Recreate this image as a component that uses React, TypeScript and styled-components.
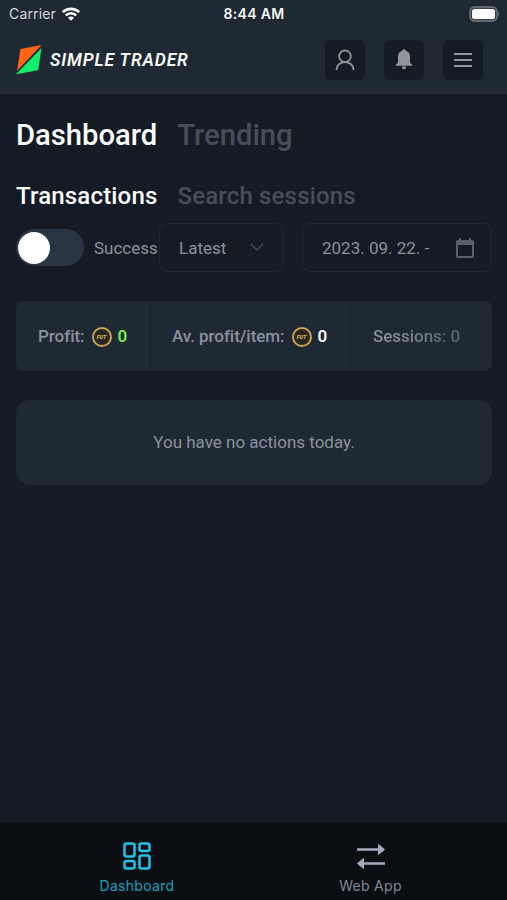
import React from 'react';
import styled, { createGlobalStyle } from 'styled-components';

const GlobalStyle = createGlobalStyle`
  * { box-sizing: border-box; }
  body { margin: 0; background: #141b24; }
`;

const Screen = styled.div`
  width: 507px;
  height: 900px;
  display: flex;
  flex-direction: column;
  overflow: hidden;
  background: #141b24;
  color: #8b929e;
  font-family: Roboto, sans-serif;
  white-space: nowrap;
`;

const TopBar = styled.header`
  height: 94px;
  background: #1f2933;
`;

const StatusBar = styled.div`
  height: 27px;
  display: grid;
  grid-template-columns: 1fr auto 1fr;
  align-items: center;
  padding: 0 7px 0 9px;
  font-family: Inter, sans-serif;
  color: #f4f5f6;
`;

const Carrier = styled.div`
  display: flex;
  align-items: center;
  gap: 6px;
  font-size: 14px;
  letter-spacing: 0.15px;
  color: #d6d9dc;
`;

const Clock = styled.div`
  font-size: 14px;
  font-weight: 600;
  letter-spacing: 0.3px;
  margin-right: 1px;
`;

const Battery = styled.svg`
  justify-self: end;
`;

const Header = styled.div`
  height: 65px;
  display: flex;
  align-items: center;
  padding: 0 24px 0 15px;
`;

const Brand = styled.div`
  display: flex;
  align-items: center;
  gap: 8px;
  margin-right: auto;
`;

const BrandName = styled.span`
  font: italic 600 17.5px/20px Roboto, sans-serif;
  letter-spacing: 0.86px;
  color: #f8f9fa;
`;

const Actions = styled.div`
  display: flex;
  gap: 19px;
`;

const IconButton = styled.button`
  width: 40px;
  height: 40px;
  padding: 0;
  border: 0;
  border-radius: 6px;
  display: grid;
  place-items: center;
  background: #141b24;
  color: #92969c;
`;

const Content = styled.main`
  flex: 1;
  padding: 0 15px 0 16px;
`;

const Tabs = styled.nav<{ $size: number; $height: number; $spacing: number }>`
  display: flex;
  align-items: center;
  gap: 20px;
  height: ${p => p.$height}px;
  font-size: ${p => p.$size}px;
  letter-spacing: ${p => p.$spacing}px;
`;

const Tab = styled.span<{ $active?: boolean }>`
  font-weight: 500;
  color: ${p => (p.$active ? '#fbfcfd' : '#454f5b')};
`;

const Filters = styled.div`
  display: flex;
  align-items: center;
  height: 49px;
  margin-top: 8px;
  font-size: 17px;
`;

const Toggle = styled.div`
  display: flex;
  align-items: center;
  width: 68px;
  height: 37px;
  padding: 0 2px;
  border-radius: 19px;
  background: #293543;
`;

const Knob = styled.div`
  width: 32px;
  height: 32px;
  border-radius: 50%;
  background: #fff;
`;

const ToggleLabel = styled.span`
  width: 75px;
  padding-left: 10px;
`;

const Field = styled.div<{ $width: number; $gap?: number; $end: number }>`
  width: ${p => p.$width}px;
  height: 49px;
  margin-left: ${p => p.$gap ?? 0}px;
  padding: 0 ${p => p.$end}px 0 19px;
  border: 1px solid #1f2731;
  border-radius: 8px;
  display: flex;
  align-items: center;
  justify-content: space-between;
`;

const Stats = styled.section`
  height: 70px;
  margin-top: 29px;
  display: grid;
  grid-template-columns: 134px 201px 1fr;
  border-radius: 8px;
  overflow: hidden;
  background: #1f2933;
`;

const Stat = styled.div<{ $fade?: boolean }>`
  display: flex;
  align-items: center;
  padding-left: 22px;
  font-size: 17px;
  font-weight: 500;
  letter-spacing: -0.04px;
  border-right: ${p => (p.$fade ? '0' : '1px solid #18212b')};

  & > span {
    ${p => p.$fade && `
      color: transparent;
      background: linear-gradient(90deg, #8b929e 20%, #5c6672 85%);
      background-clip: text;
    `}
  }
`;

const StatValue = styled.b<{ $color: string }>`
  font-weight: 600;
  color: ${p => p.$color};
`;

const Coin = styled.div`
  width: 20px;
  height: 20px;
  margin: 1px 6px 0 7px;
  display: grid;
  place-items: center;
  border: 2px solid #c9a44e;
  border-radius: 50%;
  background: #272620;
  color: #d9b75c;
  font: italic 900 5.5px/6px Roboto, sans-serif;
`;

const Empty = styled.section`
  height: 85px;
  margin-top: 29px;
  padding-bottom: 1px;
  display: grid;
  place-items: center;
  border-radius: 14px;
  background: #1f2933;
  font-size: 17px;
`;

const BottomNav = styled.nav`
  height: 78px;
  display: grid;
  grid-template-columns: 234px 233px;
  padding-left: 20px;
  background: #0b0f14;
`;

const NavItem = styled.div<{ $color: string }>`
  display: flex;
  flex-direction: column;
  align-items: center;
  padding-top: 20px;
  gap: 7px;
  color: ${p => p.$color};
  font: 400 14px/18px Inter, sans-serif;
  letter-spacing: 0.3px;
`;

const NavText = styled.span<{ $color: string }>`
  color: ${p => p.$color};
`;

const WifiIcon = () => (
  <svg width="18" height="14" viewBox="0 0 18 14" fill="none" stroke="#fff" strokeWidth="2.6">
    <path d="M.8 5.2C5.2.7 12.8.7 17.2 5.2M3.8 8.4c3-2.9 7.4-2.9 10.4 0" />
    <path d="M9 13.8 6 10.8Q9 8.4 12 10.8Z" fill="#fff" stroke="none" />
  </svg>
);

const LogoMark = () => (
  <svg width="27" height="30" viewBox="0 0 27 30">
    <path d="M5.5 4 26.6 0 2 26Z" fill="#ff6517" />
    <path d="M26.5 3 23.2 25.2 1 29.3Z" fill="#12ed6b" />
  </svg>
);

const UserIcon = () => (
  <svg width="20" height="22" viewBox="0 0 20 22" fill="none" stroke="currentColor" strokeWidth="1.8">
    <circle cx="10" cy="7.3" r="5.8" />
    <path d="M1.5 21v-.5a8.500 7.400 0 0 1 17 0v.5" />
  </svg>
);

const BellIcon = () => (
  <svg width="18" height="21" viewBox="0 0 18 21" fill="currentColor">
    <path d="M9 .3c1.200 0 2 .8 2 1.800 2.800.8 4 2.800 4 5.700v4.600c0 1.400.6 2.200 2.300 3v1.400H.7v-1.400c1.700-.8 2.300-1.600 2.300-3V7.800C3 4.900 4.200 2.900 7 2.100 7 1.100 7.800.3 9 .3Z" />
    <path d="M6.800 17.600h4.400c0 1.800-.9 2.800-2.200 2.800s-2.200-1-2.200-2.800Z" />
  </svg>
);

const MenuIcon = () => (
  <svg width="18" height="16" viewBox="0 0 18 16" stroke="currentColor" strokeWidth="1.8">
    <path d="M0 2h18M0 8h18M0 14h18" />
  </svg>
);

const ChevronIcon = () => (
  <svg width="14" height="9" viewBox="0 0 14 9" fill="none" stroke="#424c58" strokeWidth="1.4">
    <path d="m1 1 6 6 6-6" />
  </svg>
);

const CalendarIcon = () => (
  <svg width="18" height="20" viewBox="0 0 18 20">
    <path fill="#56616d" fillRule="evenodd" d="M3 0h2v2h8V0h2v2h1q2 0 2 2v14q0 2-2 2H2q-2 0-2-2V4q0-2 2-2h1ZM2 7v11h14V7Z" />
  </svg>
);

const DashboardIcon = () => (
  <svg width="28" height="28" viewBox="0 0 28 28" fill="none" stroke="currentColor" strokeWidth="2.5">
    <rect x="1.5" y="1.5" width="10" height="13" rx="2" />
    <rect x="16.5" y="1.5" width="10" height="7.5" rx="2" />
    <rect x="1.5" y="19" width="10" height="7.5" rx="2" />
    <rect x="16.5" y="13.5" width="10" height="13" rx="2" />
  </svg>
);

const TransferIcon = () => (
  <svg width="30" height="28" viewBox="0 0 30 28">
    <path d="M1 7.500h23M29 21.500H7" fill="none" stroke="currentColor" strokeWidth="2.600" />
    <path d="M22.500 2.500 28.500 7.500l-6 5ZM7.500 16.500l-6 5 6 5Z" fill="currentColor" stroke="currentColor" strokeLinejoin="round" />
  </svg>
);

export default function App() {
  return (
    <Screen>
      <GlobalStyle />
      <TopBar>
        <StatusBar>
          <Carrier>Carrier <WifiIcon /></Carrier>
          <Clock>8:44 AM</Clock>
          <Battery width="31" height="16" viewBox="0 0 31 16">
            <rect x="1" y="1" width="27" height="14" rx="4.5" fill="#39424b" stroke="#747a82" strokeWidth="1.3" />
            <rect x="3" y="3" width="23" height="10" rx="2.5" fill="#fff" />
            <path d="M29 5.500q2 2.500 0 5Z" fill="#747a82" />
          </Battery>
        </StatusBar>
        <Header>
          <Brand><LogoMark /><BrandName>SIMPLE TRADER</BrandName></Brand>
          <Actions>
            <IconButton aria-label="Profile"><UserIcon /></IconButton>
            <IconButton aria-label="Notifications"><BellIcon /></IconButton>
            <IconButton aria-label="Menu"><MenuIcon /></IconButton>
          </Actions>
        </Header>
      </TopBar>
      <Content>
        <Tabs $size={29.2} $height={82} $spacing={0}>
          <Tab $active>Dashboard</Tab><Tab>Trending</Tab>
        </Tabs>
        <Tabs $size={24} $height={39} $spacing={0.17}>
          <Tab $active>Transactions</Tab><Tab>Search sessions</Tab>
        </Tabs>
        <Filters>
          <Toggle><Knob /></Toggle>
          <ToggleLabel>Success</ToggleLabel>
          <Field $width={124} $end={18}>Latest<ChevronIcon /></Field>
          <Field $width={190} $gap={19} $end={17}>2023. 09. 22. -<CalendarIcon /></Field>
        </Filters>
        <Stats>
          <Stat><span>Profit:</span><Coin>FUT</Coin><StatValue $color="#79ed4f">0</StatValue></Stat>
          <Stat><span>Av. profit/item:</span><Coin>FUT</Coin><StatValue $color="#f5f7f9">0</StatValue></Stat>
          <Stat $fade><span>Sessions: 0</span></Stat>
        </Stats>
        <Empty>You have no actions today.</Empty>
      </Content>
      <BottomNav>
        <NavItem $color="#20c3e8"><DashboardIcon /><NavText $color="#1b9fbd">Dashboard</NavText></NavItem>
        <NavItem $color="#a9a9bd"><TransferIcon /><NavText $color="#858793">Web App</NavText></NavItem>
      </BottomNav>
    </Screen>
  );
}
